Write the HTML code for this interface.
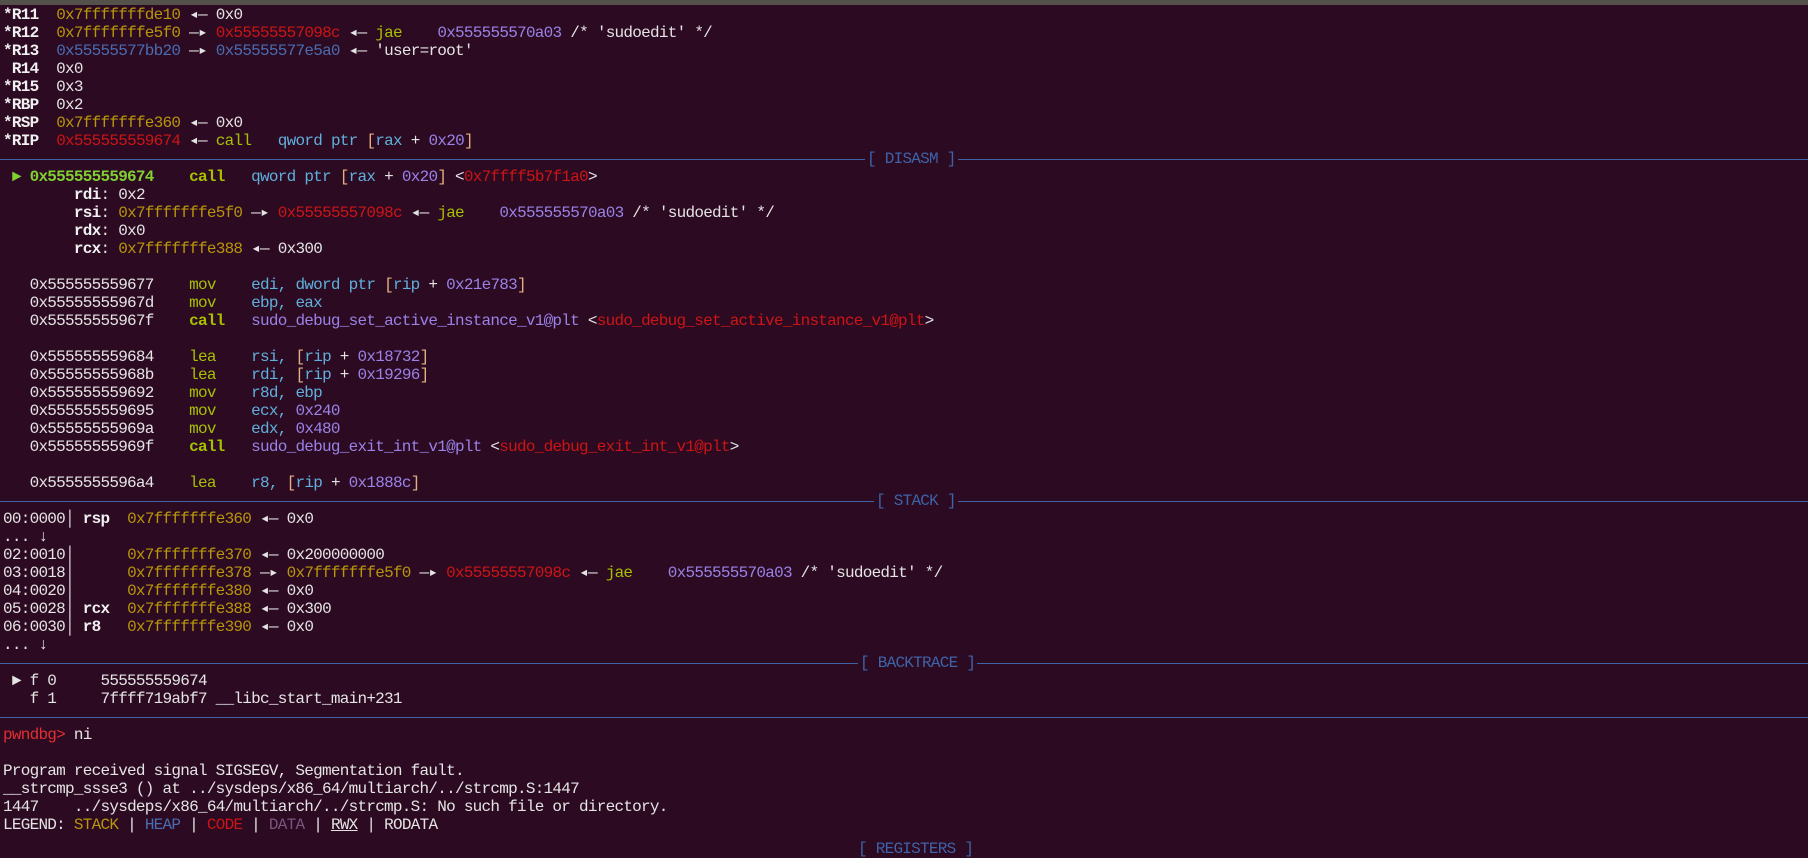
<!DOCTYPE html>
<html><head><meta charset="utf-8">
<style>
html,body{margin:0;padding:0;background:#2c0a22;width:1808px;height:841px;overflow:hidden}
#top{position:absolute;left:0;top:0;width:1808px;height:5px;background:#54514a}
#t{position:absolute;left:3px;top:6px;font-family:"Liberation Mono","DejaVu Sans Mono",monospace;font-size:16px;letter-spacing:-0.74px;color:#e4e4e4}
.l{height:18px;line-height:18px;white-space:pre;position:relative;width:1805px}
.s{height:18px;position:relative;width:1805px}
.s:before{content:"";position:absolute;left:-3px;right:0;top:9px;height:1px;background:#3e63a8}
.s span{position:absolute;top:0;line-height:18px;background:#2c0a22;color:#3e63a8;white-space:pre;padding:0 2px}
b{font-weight:bold;color:#f0f0f0}
.y{color:#b8960a}.r{color:#cc1515}.bl{color:#4a6cb0}.p{color:#9a82e6}
.g{color:#a6c000}.gb{color:#a6c000;font-weight:bold}.c{color:#5fb0dc}
.o{color:#e0b080}.gr{color:#80d030;font-weight:bold}.d{color:#7a5580}
.pr{color:#e03030}
</style></head><body>
<div id="top"></div>
<div id="t">
<div class="l"><b>*R11</b>  <span class="y">0x7fffffffde10</span> ◂— 0x0</div>
<div class="l"><b>*R12</b>  <span class="y">0x7fffffffe5f0</span> —▸ <span class="r">0x55555557098c</span> ◂— <span class="g">jae</span>    <span class="p">0x555555570a03</span> /* 'sudoedit' */</div>
<div class="l"><b>*R13</b>  <span class="bl">0x55555577bb20</span> —▸ <span class="bl">0x55555577e5a0</span> ◂— 'user=root'</div>
<div class="l"><b> R14</b>  0x0</div>
<div class="l"><b>*R15</b>  0x3</div>
<div class="l"><b>*RBP</b>  0x2</div>
<div class="l"><b>*RSP</b>  <span class="y">0x7fffffffe360</span> ◂— 0x0</div>
<div class="l"><b>*RIP</b>  <span class="r">0x555555559674</span> ◂— <span class="g">call</span>   <span class="c">qword ptr</span> <span class="o">[</span><span class="c">rax</span> + <span class="p">0x20</span><span class="o">]</span></div>
<div class="s"><span style="left:862px">[ DISASM ]</span></div>
<div class="l"><span class="gr"> ► 0x555555559674</span>    <span class="gb">call</span>   <span class="c">qword ptr</span> <span class="o">[</span><span class="c">rax</span> + <span class="p">0x20</span><span class="o">]</span> &lt;<span class="r">0x7ffff5b7f1a0</span>&gt;</div>
<div class="l">        <b>rdi</b>: 0x2</div>
<div class="l">        <b>rsi</b>: <span class="y">0x7fffffffe5f0</span> —▸ <span class="r">0x55555557098c</span> ◂— <span class="g">jae</span>    <span class="p">0x555555570a03</span> /* 'sudoedit' */</div>
<div class="l">        <b>rdx</b>: 0x0</div>
<div class="l">        <b>rcx</b>: <span class="y">0x7fffffffe388</span> ◂— 0x300</div>
<div class="l"> </div>
<div class="l">   0x555555559677    <span class="g">mov</span>    <span class="c">edi, dword ptr</span> <span class="o">[</span><span class="c">rip</span> + <span class="p">0x21e783</span><span class="o">]</span></div>
<div class="l">   0x55555555967d    <span class="g">mov</span>    <span class="c">ebp, eax</span></div>
<div class="l">   0x55555555967f    <span class="gb">call</span>   <span class="p">sudo_debug_set_active_instance_v1@plt</span> &lt;<span class="r">sudo_debug_set_active_instance_v1@plt</span>&gt;</div>
<div class="l"> </div>
<div class="l">   0x555555559684    <span class="g">lea</span>    <span class="c">rsi,</span> <span class="o">[</span><span class="c">rip</span> + <span class="p">0x18732</span><span class="o">]</span></div>
<div class="l">   0x55555555968b    <span class="g">lea</span>    <span class="c">rdi,</span> <span class="o">[</span><span class="c">rip</span> + <span class="p">0x19296</span><span class="o">]</span></div>
<div class="l">   0x555555559692    <span class="g">mov</span>    <span class="c">r8d, ebp</span></div>
<div class="l">   0x555555559695    <span class="g">mov</span>    <span class="c">ecx,</span> <span class="p">0x240</span></div>
<div class="l">   0x55555555969a    <span class="g">mov</span>    <span class="c">edx,</span> <span class="p">0x480</span></div>
<div class="l">   0x55555555969f    <span class="gb">call</span>   <span class="p">sudo_debug_exit_int_v1@plt</span> &lt;<span class="r">sudo_debug_exit_int_v1@plt</span>&gt;</div>
<div class="l"> </div>
<div class="l">   0x5555555596a4    <span class="g">lea</span>    <span class="c">r8,</span> <span class="o">[</span><span class="c">rip</span> + <span class="p">0x1888c</span><span class="o">]</span></div>
<div class="s"><span style="left:871px">[ STACK ]</span></div>
<div class="l">00:0000│ <b>rsp</b>  <span class="y">0x7fffffffe360</span> ◂— 0x0</div>
<div class="l">... ↓</div>
<div class="l">02:0010│      <span class="y">0x7fffffffe370</span> ◂— 0x200000000</div>
<div class="l">03:0018│      <span class="y">0x7fffffffe378</span> —▸ <span class="y">0x7fffffffe5f0</span> —▸ <span class="r">0x55555557098c</span> ◂— <span class="g">jae</span>    <span class="p">0x555555570a03</span> /* 'sudoedit' */</div>
<div class="l">04:0020│      <span class="y">0x7fffffffe380</span> ◂— 0x0</div>
<div class="l">05:0028│ <b>rcx</b>  <span class="y">0x7fffffffe388</span> ◂— 0x300</div>
<div class="l">06:0030│ <b>r8</b>   <span class="y">0x7fffffffe390</span> ◂— 0x0</div>
<div class="l">... ↓</div>
<div class="s"><span style="left:855px">[ BACKTRACE ]</span></div>
<div class="l"> ► f 0     555555559674</div>
<div class="l">   f 1     7ffff719abf7 __libc_start_main+231</div>
<div class="s"><span style="display:none"></span></div>
<div class="l"><span class="pr">pwndbg&gt;</span> ni</div>
<div class="l"> </div>
<div class="l">Program received signal SIGSEGV, Segmentation fault.</div>
<div class="l">__strcmp_ssse3 () at ../sysdeps/x86_64/multiarch/../strcmp.S:1447</div>
<div class="l">1447	../sysdeps/x86_64/multiarch/../strcmp.S: No such file or directory.</div>
<div class="l">LEGEND: <span class="y">STACK</span> | <span class="bl">HEAP</span> | <span class="r">CODE</span> | <span class="d">DATA</span> | <u>RWX</u> | RODATA</div>
<div class="l"><span style="position:absolute;left:855px;top:6px;color:#3e63a8">[ REGISTERS ]</span></div>
</div>
</body></html>
